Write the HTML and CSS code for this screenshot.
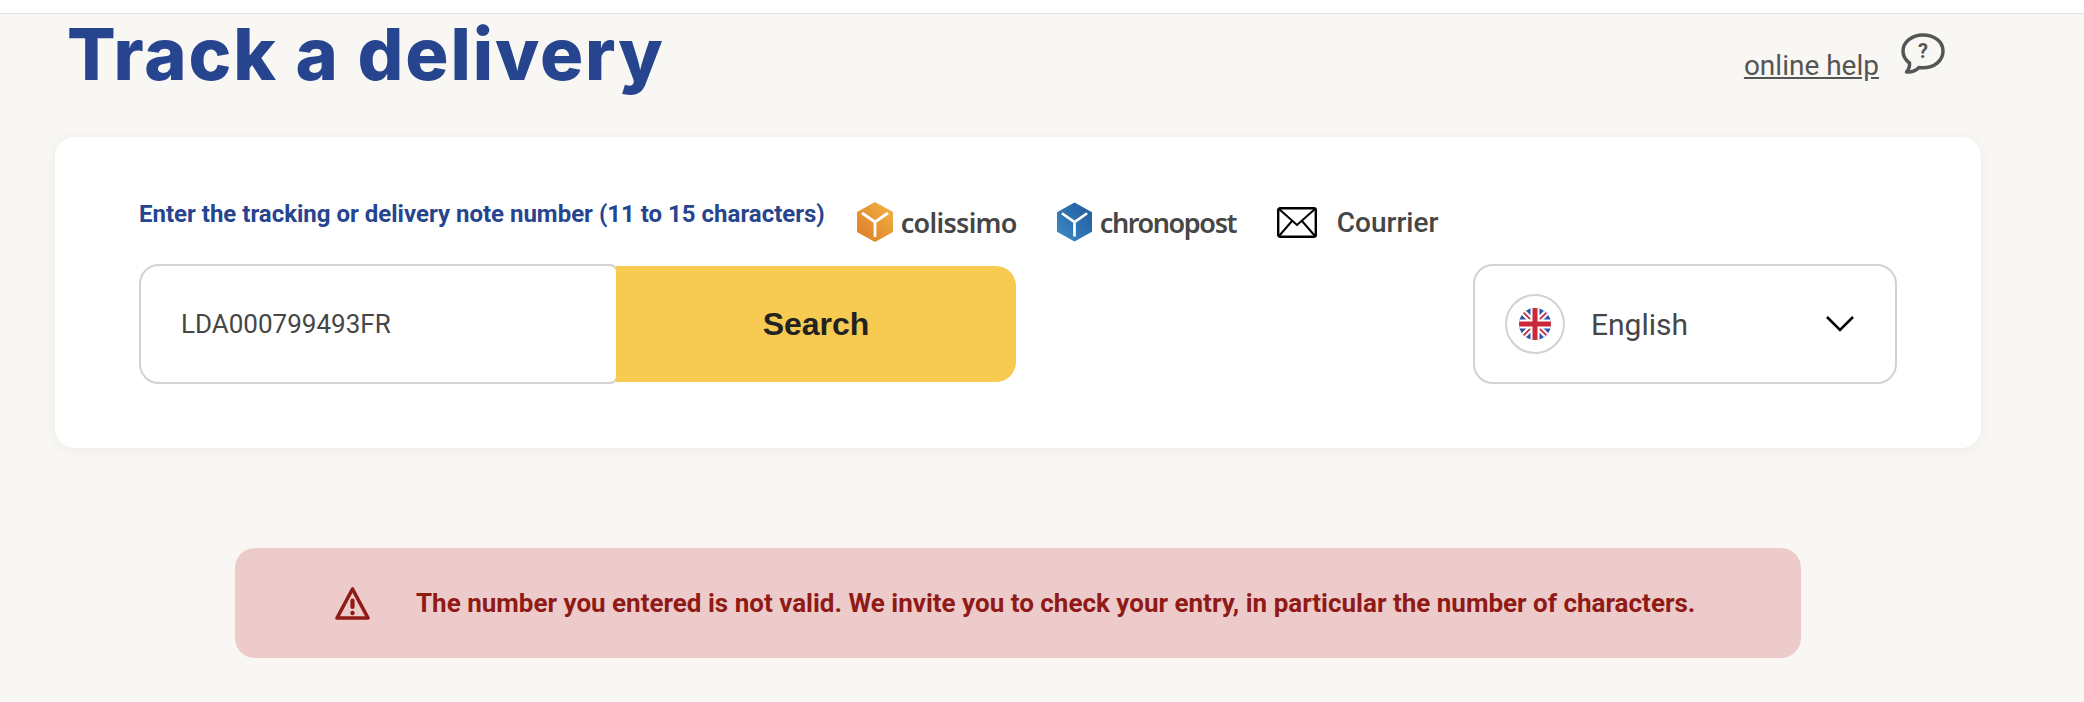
FILE: index.html
```html
<!DOCTYPE html>
<html lang="en">
<head>
    <meta charset="UTF-8">
    <meta name="viewport" content="width=device-width, initial-scale=1.0">
    <title>Track a delivery</title>
    <link rel="stylesheet" href="styles.css">
</head>
<body>
    <div class="topbar"></div>

    <header class="page-head">
        <h1>Track a delivery</h1>
        <div class="help">
            <a href="#" class="help-link">online help</a>
            <svg class="help-icon" viewBox="0 0 44 42" width="44" height="42">
                <path d="M22 2C11 2 2 9 2 18c0 5 2.500 9 6.500 12 .5 3-1 6.500-3 9 4.500.5 9-1 12.500-4.500 1.300.2 2.700.3 4 .3 11 0 20-7 20-16.800S33 2 22 2z" fill="none" stroke="#555" stroke-width="3.500" stroke-linejoin="round"/>
                <text x="22" y="25" class="help-mark">?</text>
            </svg>
        </div>
    </header>

    <section class="card">
        <div class="card-top">
            <label class="track-label" for="tracking">Enter the tracking or delivery note number (11 to 15 characters)</label>
            <div class="carriers">
                <div class="carrier carrier-colissimo">
                    <svg viewBox="0 0 36 40" width="36" height="40">
                        <defs>
                            <linearGradient id="boxOrange" x1="0" y1="1" x2="1" y2="0">
                                <stop offset="0" stop-color="#dd7a26"/>
                                <stop offset="1" stop-color="#f1b544"/>
                            </linearGradient>
                        </defs>
                        <path d="M18 0l18 10v20L18 40 0 30V10z" fill="url(#boxOrange)"/>
                        <path d="M5 11l13 9 13-9M18 20v15" fill="none" stroke="#fff" stroke-width="2.800"/>
                    </svg>
                    <span class="carrier-name">colissimo</span>
                </div>
                <div class="carrier carrier-chronopost">
                    <svg viewBox="0 0 36 40" width="35" height="40">
                        <defs>
                            <linearGradient id="boxBlue" x1="0" y1="1" x2="1" y2="0">
                                <stop offset="0" stop-color="#3f8ac8"/>
                                <stop offset="1" stop-color="#1f5a9a"/>
                            </linearGradient>
                        </defs>
                        <path d="M18 0l18 10v20L18 40 0 30V10z" fill="url(#boxBlue)"/>
                        <path d="M5 11l13 9 13-9M18 20v15" fill="none" stroke="#fff" stroke-width="2.800"/>
                    </svg>
                    <span class="carrier-name">chronopost</span>
                </div>
                <div class="carrier carrier-mail">
                    <svg viewBox="0 0 40 31" width="40" height="31">
                        <rect x="1.200" y="1.200" width="37.600" height="28.600" rx="2" fill="none" stroke="#000" stroke-width="2.400"/>
                        <path d="M2 2l18 16L38 2M2 29l13-15M38 29L25 14" fill="none" stroke="#000" stroke-width="2"/>
                    </svg>
                    <span class="mail-name">Courrier</span>
                </div>
            </div>
        </div>

        <div class="card-form">
            <div class="search">
                <input class="search-input" id="tracking" type="text" value="LDA000799493FR">
                <button class="search-btn" type="button">Search</button>
            </div>
            <div class="lang">
                <span class="lang-flag">
                    <svg viewBox="0 0 32 32" width="32" height="32">
                        <defs><clipPath id="flagClip"><circle cx="16" cy="16" r="16"/></clipPath></defs>
                        <g clip-path="url(#flagClip)">
                            <rect width="32" height="32" fill="#2a55a3"/>
                            <path d="M0 0l32 32M32 0L0 32" stroke="#fff" stroke-width="6"/>
                            <path d="M0 0l32 32M32 0L0 32" stroke="#c9283a" stroke-width="1.800"/>
                            <path d="M16 0v32M0 16h32" stroke="#fff" stroke-width="9"/>
                            <path d="M16 0v32M0 16h32" stroke="#c9283a" stroke-width="5"/>
                        </g>
                    </svg>
                </span>
                <span class="lang-name">English</span>
                <svg class="lang-arrow" viewBox="0 0 28 16" width="28" height="16">
                    <path d="M1 1l13 13L27 1" fill="none" stroke="#000" stroke-width="2.600"/>
                </svg>
            </div>
        </div>
    </section>

    <div class="alert">
        <svg class="alert-icon" viewBox="0 0 35 34" width="35" height="34">
            <path d="M17.500 3L2 32h31z" fill="none" stroke="#8f1a16" stroke-width="3.600" stroke-linejoin="round"/>
            <rect x="15.400" y="12.500" width="4.200" height="10.500" rx="2.100" fill="#8f1a16"/>
            <circle cx="17.500" cy="27" r="2.200" fill="#8f1a16"/>
        </svg>
        <p class="alert-text">The number you entered is not valid. We invite you to check your entry, in particular the number of characters.</p>
    </div>
</body>
</html>
```

FILE: styles.css
```css
:root {
    --page-bg: #f8f7f4;
    --title-blue: #27458f;
    --line-grey: #d2d2d2;
    --text-grey: #464646;
    --yellow: #f7cb52;
    --alert-red: #8f1a16;
}

* {
    box-sizing: border-box;
}

html, body {
    height: 100%;
}

body {
    margin: 0;
    background-color: var(--page-bg);
    font-family: Roboto, "Liberation Sans", sans-serif;
    color: var(--text-grey);
    overflow: hidden;
}

.topbar {
    height: 14px;
    background-color: #fff;
    border-bottom: 1px solid #dfdfdf;
}

.page-head {
    display: flex;
    justify-content: space-between;
    height: 123px;
    padding: 0 139px 0 67px;
}

h1 {
    margin: 0;
    font-family: Inter, "Liberation Sans", sans-serif;
    font-size: 72px;
    font-weight: 800;
    letter-spacing: 1.900px;
    line-height: 79px;
    color: var(--title-blue);
}

.help {
    display: flex;
    align-items: flex-start;
    gap: 22px;
    padding-top: 19px;
}

.help-link {
    margin-top: 16px;
    font-size: 28px;
    line-height: 33px;
    color: #555;
}

.help-mark {
    font-size: 20px;
    font-weight: 700;
    fill: #555;
    text-anchor: middle;
}

.card {
    width: 1926px;
    height: 311px;
    margin-left: 55px;
    padding: 61px 84px 0 84px;
    background-color: #fff;
    border-radius: 20px;
    box-shadow: 0 2px 14px rgba(0, 0, 0, 0.05);
}

.card-top {
    display: flex;
    gap: 32px;
    height: 66px;
}

.track-label {
    font-size: 24px;
    font-weight: 700;
    line-height: 32px;
    color: var(--title-blue);
}

.carriers {
    display: flex;
    align-items: center;
    height: 48px;
}

.carrier {
    display: flex;
    align-items: center;
}

.carrier-colissimo {
    gap: 8px;
    width: 200px;
}

.carrier-chronopost {
    gap: 8px;
    width: 220px;
}

.carrier-mail {
    gap: 20px;
}

.carrier-name {
    font-family: "Noto Sans", sans-serif;
    font-size: 27px;
    font-weight: 600;
    letter-spacing: -0.700px;
    color: var(--text-grey);
}

.carrier-chronopost .carrier-name {
    letter-spacing: -1.400px;
}

.mail-name {
    font-size: 28px;
    font-weight: 500;
}

.card-form {
    display: flex;
    justify-content: space-between;
}

.search {
    display: flex;
    align-items: center;
}

.search-input {
    width: 479px;
    height: 120px;
    padding: 0 40px;
    border: 2px solid var(--line-grey);
    border-radius: 20px 8px 8px 20px;
    font-family: inherit;
    font-size: 26px;
    color: var(--text-grey);
    outline: none;
}

.search-btn {
    width: 400px;
    height: 116px;
    margin-left: -2px;
    border: none;
    border-radius: 0 20px 20px 0;
    background-color: var(--yellow);
    font-family: "Liberation Sans", sans-serif;
    font-size: 32px;
    font-weight: 700;
    color: #222;
}

.lang {
    display: flex;
    align-items: center;
    width: 424px;
    height: 120px;
    padding: 0 41px 0 30px;
    border: 2px solid var(--line-grey);
    border-radius: 20px;
}

.lang-flag {
    display: flex;
    align-items: center;
    justify-content: center;
    width: 60px;
    height: 60px;
    border: 2px solid var(--line-grey);
    border-radius: 50%;
}

.lang-name {
    flex: 1;
    margin-left: 26px;
    font-size: 30px;
}

.alert {
    display: flex;
    align-items: center;
    gap: 46px;
    width: 1566px;
    height: 110px;
    margin: 100px 0 0 235px;
    padding-left: 100px;
    background-color: #eecbcb;
    border-radius: 20px;
}

.alert-text {
    margin: 0;
    font-size: 26px;
    font-weight: 700;
    color: var(--alert-red);
}
```
